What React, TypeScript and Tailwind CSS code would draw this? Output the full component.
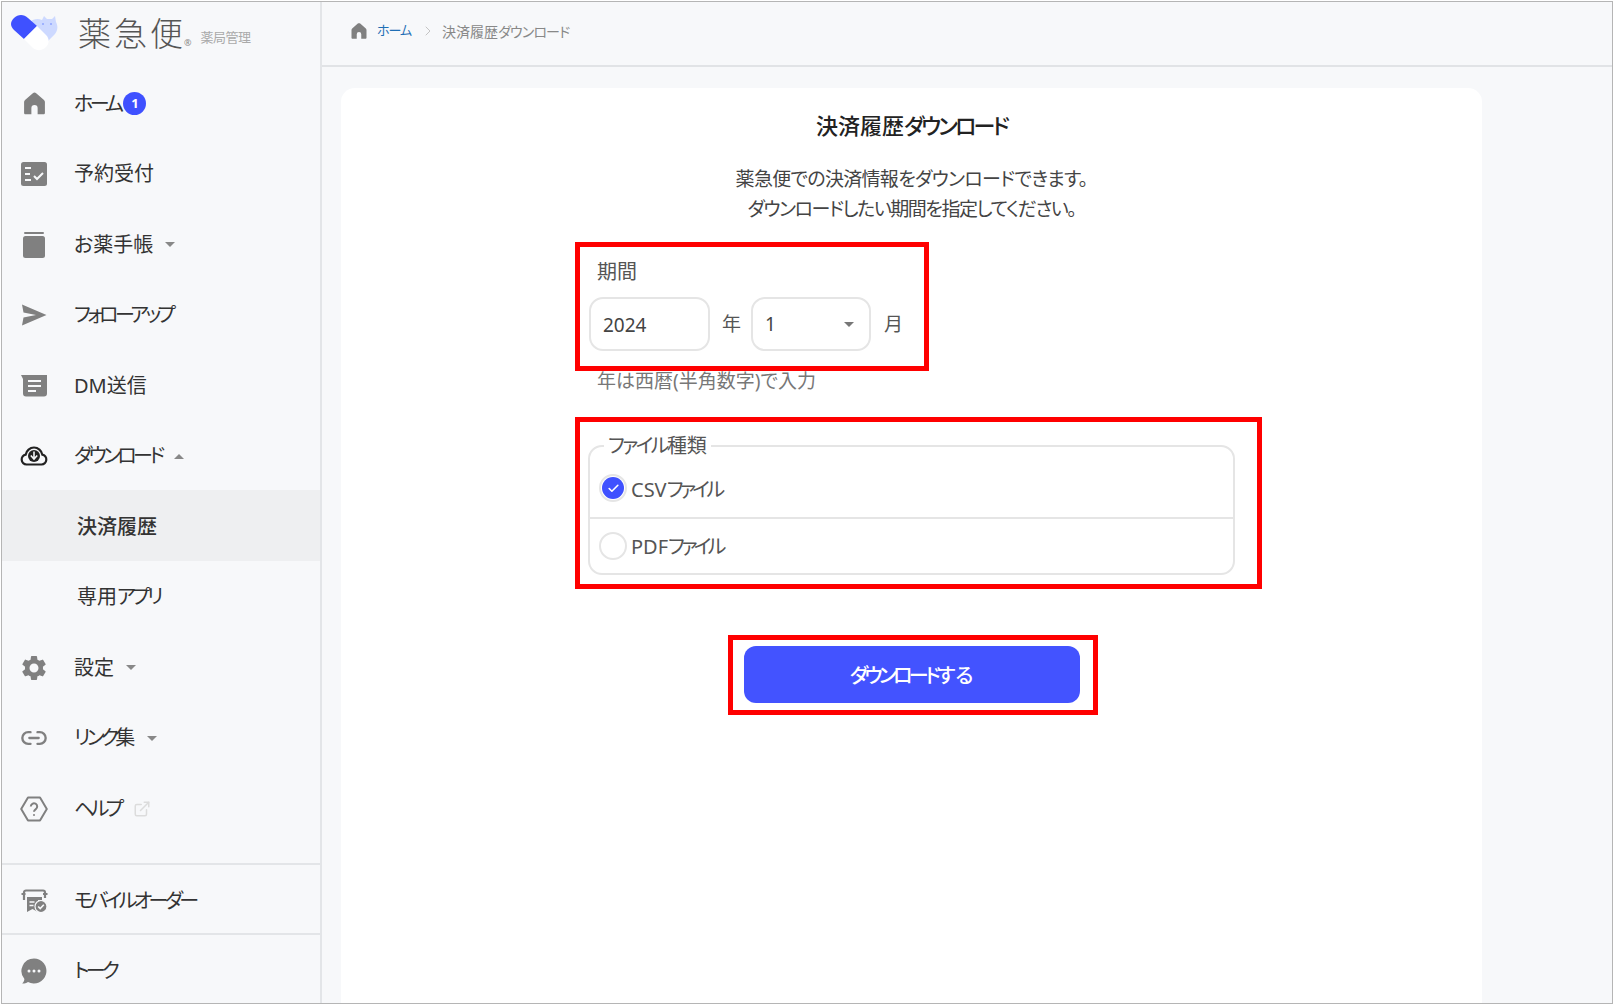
import { Check, ChevronRight, ExternalLink, Link2 } from "lucide-react";
import type { ReactNode } from "react";

const GRAY = "#808080";

// the reference font sets katakana much narrower than Noto, so squeeze those runs
function T({ text, kana = "tracking-[-0.18em]" }: { text: string; kana?: string }) {
  return (
    <>
      {text.split(/([\u30A0-\u30FF]+)/).map((part, i) =>
        /[\u30A0-\u30FF]/.test(part) ? (
          <span key={i} className={kana}>
            {part}
          </span>
        ) : (
          part
        )
      )}
    </>
  );
}

function HomeIcon({ className }: { className: string }) {
  return (
    <svg viewBox="0 0 24 24" className={className} fill={GRAY}>
      <path d="M12 1.500c-.6 0-1.100.2-1.600.6L2.900 8.700c-.6.5-.9 1.200-.9 1.900V21c0 .8.6 1.400 1.400 1.400H9v-6a3 3 0 0 1 6 0v6h5.600c.8 0 1.400-.6 1.400-1.400V10.600c0-.7-.3-1.400-.9-1.900L13.600 2.100c-.5-.4-1-.6-1.600-.6z" />
    </svg>
  );
}

function ReserveIcon() {
  return (
    <svg viewBox="0 0 26 24" className="h-[24px] w-[26px]">
      <rect x="0" y="0" width="26" height="24" rx="2.500" fill={GRAY} />
      <path d="M4 6h6M4 12h5M4 18h6" stroke="#f7f8fa" strokeWidth="2" />
      <path d="M13 14l3 3 6-6" stroke="#f7f8fa" strokeWidth="2" fill="none" />
    </svg>
  );
}

function BookIcon() {
  return (
    <svg viewBox="0 0 22 26" className="h-[26px] w-[22px]" fill={GRAY}>
      <rect x="1" y="0" width="20" height="2" rx="1" />
      <rect x="0" y="4" width="22" height="22" rx="2.500" />
    </svg>
  );
}

function SendIcon() {
  return (
    <svg viewBox="0 0 26 22" className="h-[22px] w-[26px]" fill={GRAY}>
      <path d="M1 0.500L25.500 11 1 21.500 2.500 13.500 15 11 2.500 8.500z" />
    </svg>
  );
}

function DmIcon() {
  return (
    <svg viewBox="0 0 26 22" className="h-[22px] w-[26px]">
      <path d="M0 0h26v18.500a3 3 0 0 1-3 3H5a3 3 0 0 1-3-3V4z" fill={GRAY} />
      <path d="M7 6h13M7 11h13M7 16h8" stroke="#f7f8fa" strokeWidth="2" />
    </svg>
  );
}

function CloudIcon() {
  return (
    <svg viewBox="0 0 28 20" className="h-[20px] w-[28px]">
      <path
        d="M8 18.500H6.500a5 5 0 0 1-.8-9.900A8.500 8.500 0 0 1 14 1.500a8.500 8.500 0 0 1 8.300 7.100 5 5 0 0 1-.8 9.900z"
        fill="none"
        stroke="#222"
        strokeWidth="2.200"
      />
      <circle cx="14" cy="10" r="6" fill="#222" />
      <path d="M14 5.500v6M10.800 9.500L14 13l3.200-3.500" stroke="#f7f8fa" strokeWidth="1.600" fill="none" />
    </svg>
  );
}

function GearIcon() {
  return (
    <svg viewBox="0 0 24 24" className="h-[30px] w-[30px]" fill={GRAY}>
      <path d="M19.140 12.940c.04-.3.060-.61.060-.94 0-.32-.020-.64-.070-.94l2.030-1.580a.49.490 0 0 0 .12-.61l-1.920-3.320a.488.488 0 0 0-.59-.22l-2.390.96c-.5-.38-1.030-.7-1.620-.94l-.36-2.540a.484.484 0 0 0-.48-.41h-3.840c-.24 0-.43.170-.47.410l-.36 2.540c-.59.240-1.130.570-1.620.94l-2.390-.96c-.22-.080-.47 0-.59.220L2.740 8.870c-.12.210-.080.470.12.610l2.030 1.580c-.05.300-.09.630-.09.940s.02.640.07.940l-2.030 1.580a.49.490 0 0 0-.12.610l1.920 3.320c.12.220.37.290.59.220l2.390-.96c.5.380 1.030.7 1.620.94l.36 2.540c.05.240.24.410.48.410h3.840c.24 0 .44-.170.47-.41l.36-2.540c.59-.240 1.130-.560 1.620-.94l2.390.96c.22.080.47 0 .59-.220l1.920-3.320c.12-.220.07-.470-.12-.610l-2.010-1.580zM12 15.600A3.610 3.610 0 0 1 8.400 12c0-1.980 1.620-3.600 3.600-3.600s3.600 1.620 3.600 3.600-1.620 3.600-3.600 3.600z" />
    </svg>
  );
}

function HelpIcon() {
  return (
    <svg viewBox="0 0 28 26" className="h-[26px] w-[28px]" fill="none" stroke={GRAY} strokeWidth="2">
      <path d="M8 1.500h12L26.800 13 20 24.500H8L1.200 13z" strokeLinejoin="round" />
      <path d="M10.800 10.500a3.200 3.200 0 1 1 5 2.700c-1 .7-1.800 1.300-1.800 2.600" />
      <circle cx="14" cy="19" r="1" fill={GRAY} stroke="none" />
    </svg>
  );
}

function MobileOrderIcon() {
  return (
    <svg viewBox="0 0 27 24" className="h-[24px] w-[27px]">
      <path d="M3 11V3.500a2 2 0 0 1 2-2h17a2 2 0 0 1 2 2V9" fill="none" stroke={GRAY} strokeWidth="2.200" />
      <path d="M0.500 4h4v2h-4zM22 4h4.500v2H22z" fill={GRAY} />
      <path d="M6 8h15v3H6zM6 8h11v15l-5.500-3L6 23z" fill={GRAY} />
      <path d="M8.500 13h5M8.500 16.500h4" stroke="#f7f8fa" strokeWidth="1.500" />
      <circle cx="20" cy="17.500" r="6" fill={GRAY} stroke="#f7f8fa" strokeWidth="1.200" />
      <path d="M17.200 17.500l2 2 3.600-3.800" stroke="#f7f8fa" strokeWidth="1.600" fill="none" />
    </svg>
  );
}

function TalkIcon() {
  return (
    <svg viewBox="0 0 26 26" className="h-[26px] w-[26px]">
      <path d="M13 0.500a12.500 12.500 0 1 1-6 23.500c-1.800 1.200-4 1.600-5.800 1.500 1.300-1.200 2.100-2.800 2.200-4.500A12.500 12.500 0 0 1 13 0.500z" fill={GRAY} />
      <circle cx="8" cy="13" r="1.500" fill="#f7f8fa" />
      <circle cx="13" cy="13" r="1.500" fill="#f7f8fa" />
      <circle cx="18" cy="13" r="1.500" fill="#f7f8fa" />
    </svg>
  );
}

function Caret({ up }: { up?: boolean }) {
  return (
    <span
      className={
        up
          ? "ml-[12px] h-0 w-0 border-x-[5px] border-b-[5px] border-x-transparent border-b-[#888]"
          : "ml-[12px] h-0 w-0 border-x-[5px] border-t-[5px] border-x-transparent border-t-[#888]"
      }
    />
  );
}

type NavItem = {
  label: string;
  icon?: ReactNode;
  after?: ReactNode;
  active?: boolean;
};

const navItems: NavItem[] = [
  {
    label: "ホーム",
    icon: <HomeIcon className="h-[25px] w-[25px]" />,
    after: (
      <span className="ml-[3px] flex h-[23px] w-[23px] items-center justify-center rounded-full bg-[#3f51ff] text-[13px] font-bold text-white">
        1
      </span>
    ),
  },
  { label: "予約受付", icon: <ReserveIcon /> },
  { label: "お薬手帳", icon: <BookIcon />, after: <Caret /> },
  { label: "フォローアップ", icon: <SendIcon /> },
  { label: "DM送信", icon: <DmIcon /> },
  { label: "ダウンロード", icon: <CloudIcon />, after: <Caret up /> },
  { label: "決済履歴", active: true },
  { label: "専用アプリ" },
  { label: "設定", icon: <GearIcon />, after: <Caret /> },
  {
    label: "リンク集",
    icon: <Link2 className="h-[28px] w-[28px] text-[#808080]" strokeWidth={2} />,
    after: <Caret />,
  },
  {
    label: "ヘルプ",
    icon: <HelpIcon />,
    after: <ExternalLink className="ml-[12px] h-[18px] w-[18px] text-[#dcdcdc]" strokeWidth={2} />,
  },
];

function NavRow({ label, icon, after, active }: NavItem) {
  return (
    <div className={`flex h-[70.5px] items-center pt-[3px] ${active ? "bg-[#eeeff1]" : ""}`}>
      {icon ? (
        <>
          <span className="flex w-[72px] shrink-0 items-center justify-center pr-[8px]">{icon}</span>
          <span className="text-[20px] text-[#333]">
            <T text={label} />
          </span>
        </>
      ) : (
        <span className={`pl-[75px] text-[20px] text-[#333] ${active ? "font-medium" : ""}`}>
          <T text={label} />
        </span>
      )}
      {after}
    </div>
  );
}

function Logo() {
  return (
    <div className="flex h-[65px] items-start pt-[11px]">
      <svg viewBox="0 0 50 38" className="ml-[8px] h-[38px] w-[50px]">
        <path d="M34 3l3 3h5l3-3 1 6c2 4 2 8-1 12L33 33 20 20c-3-4-3-8 0-11 3-3 8-4 12-2z" fill="#cdd9ff" />
        <circle cx="33" cy="11" r="1" fill="#8fa4ff" />
        <circle cx="41" cy="11" r="1" fill="#8fa4ff" />
        <path d="M4 5c4-4 10-4 14 0l9 8-13 13-10-9C0 13 0 9 4 5z" fill="#3f51ff" />
        <path d="M14 26l13-13 9 9c4 4 3 9 0 12-4 4-9 4-13 1z" fill="#fff" />
      </svg>
      <div className="ml-[18px] flex items-baseline">
        <span className="text-[33px] leading-[42px] font-light tracking-[3px] text-[#555]">薬急便</span>
        <span className="ml-[-2px] text-[9px] text-[#888]">®</span>
        <span className="relative -top-[4px] ml-[9px] text-[13px] tracking-[-0.5px] text-[#aaa]">薬局管理</span>
      </div>
    </div>
  );
}

function Sidebar() {
  return (
    <aside className="flex w-[320px] shrink-0 flex-col border-r-2 border-[#e3e5e8]">
      <Logo />
      {navItems.map((item) => (
        <NavRow key={item.label} {...item} />
      ))}
      <div className="flex-1" />
      <div className="flex h-[70px] items-center border-t-2 border-[#e3e5e8] pt-[4px]">
        <span className="flex w-[72px] shrink-0 items-center justify-center pr-[8px]">
          <MobileOrderIcon />
        </span>
        <span className="text-[20px] text-[#333]">
          <T text="モバイルオーダー" />
        </span>
      </div>
      <div className="flex h-[70px] items-center border-t-2 border-[#e3e5e8] pt-[4px]">
        <span className="flex w-[72px] shrink-0 items-center justify-center pr-[8px]">
          <TalkIcon />
        </span>
        <span className="text-[20px] text-[#333]">
          <T text="トーク" />
        </span>
      </div>
    </aside>
  );
}

function RedBox({ className }: { className: string }) {
  return <div className={`pointer-events-none absolute border-[5px] border-[#ff0000] ${className}`} />;
}

function PeriodField() {
  return (
    <div className="w-full">
      <div className="pt-[2px] pl-[9px] text-[20px] leading-[28px] text-[#555]">期間</div>
      <div className="mt-[11px] flex items-center">
        <div className="ml-px flex h-[54px] w-[121px] items-center rounded-[14px] border-2 border-[#e5e5e5] pt-[3px] pl-[12px] text-[19px] text-[#444]">
          2024
        </div>
        <span className="ml-[12px] text-[19px] text-[#555]">年</span>
        <div className="ml-[10px] flex h-[54px] w-[120px] items-center justify-between rounded-[14px] border-2 border-[#e5e5e5] pr-[15px] pl-[12px] text-[19px] text-[#444]">
          1
          <span className="h-0 w-0 border-x-[5px] border-t-[5px] border-x-transparent border-t-[#777]" />
        </div>
        <span className="ml-[13px] text-[19px] text-[#555]">月</span>
      </div>
      <div className="mt-[16px] pl-[9px] text-[19px] leading-[28px] text-[#777]">年は西暦(半角数字)で入力</div>
    </div>
  );
}

function FileTypeField() {
  return (
    <fieldset className="mt-[38px] h-[142px] w-full rounded-[14px] border-2 border-[#e5e5e5]">
      <legend className="ml-[14px] px-[4px] text-[20px] leading-[26px] text-[#555]">
        <T text="ファイル種類" kana="tracking-[-0.13em]" />
      </legend>
      <div className="flex h-[60px] items-center border-b-2 border-[#e5e5e5] pl-[9px]">
        <span className="flex h-[28px] w-[28px] items-center justify-center rounded-full border-2 border-[#e5e5e5]">
          <span className="flex h-[22px] w-[22px] items-center justify-center rounded-full bg-[#3f51ff]">
            <Check className="h-[13px] w-[13px] text-white" strokeWidth={3} />
          </span>
        </span>
        <span className="ml-[4px] pt-[3px] text-[20px] text-[#555]">
          <T text="CSVファイル" />
        </span>
      </div>
      <div className="flex h-[54px] items-center pl-[9px]">
        <span className="h-[28px] w-[28px] rounded-full border-2 border-[#e5e5e5]" />
        <span className="ml-[4px] pt-[1px] text-[20px] text-[#555]">
          <T text="PDFファイル" />
        </span>
      </div>
    </fieldset>
  );
}

function DownloadCard() {
  return (
    <main className="ml-[19px] flex w-[1141px] flex-1 flex-col items-center rounded-t-[14px] bg-white pt-[21px]">
      <h1 className="text-[22px] leading-[32px] font-medium text-[#222]">
        <T text="決済履歴ダウンロード" kana="tracking-[-0.13em]" />
      </h1>
      <p className="mt-[23px] text-center text-[19px] leading-[30px] text-[#444]">
        <span className="tracking-[-0.7px]">薬急便での決済情報をダウンロードできます。</span>
        <br />
        <span className="tracking-[-1.45px]">ダウンロードしたい期間を指定してください。</span>
      </p>
      <div className="mt-[32px] flex w-[647px] flex-col items-center">
        <PeriodField />
        <FileTypeField />
        <button className="mt-[71px] h-[57px] w-[336px] rounded-[12px] bg-[#4353ff] pt-[2px] text-[20px] font-medium text-white">
          <T text="ダウンロードする" />
        </button>
      </div>
    </main>
  );
}

export default function App() {
  return (
    <div className="h-screen w-screen overflow-hidden bg-white p-px [font-family:'Noto_Sans','Noto_Sans_CJK_JP',sans-serif] [font-feature-settings:'palt']">
      <div className="relative flex h-[1003px] w-[1612px] overflow-hidden border border-[#b5b5b5] bg-[#f7f8fa]">
        <Sidebar />
        <div className="flex min-w-0 flex-1 flex-col">
          <header className="flex h-[65px] shrink-0 items-center border-b-2 border-[#e1e3e6] pb-[5px] pl-[28px]">
            <HomeIcon className="h-[18px] w-[18px]" />
            <span className="ml-[9px] text-[13px] text-[#1f6fb5]">
              <T text="ホーム" kana="tracking-[-0.08em]" />
            </span>
            <ChevronRight className="ml-[9px] h-[16px] w-[16px] text-[#c4c4c4]" strokeWidth={1.5} />
            <span className="ml-[6px] text-[14px] text-[#888]">
              <T text="決済履歴ダウンロード" kana="tracking-[-0.06em]" />
            </span>
          </header>
          <div className="flex flex-1 flex-col pt-[21px]">
            <DownloadCard />
          </div>
        </div>
        <RedBox className="top-[240px] left-[573px] h-[129px] w-[354px]" />
        <RedBox className="top-[415px] left-[573px] h-[172px] w-[687px]" />
        <RedBox className="top-[633px] left-[726px] h-[80px] w-[370px]" />
      </div>
    </div>
  );
}
